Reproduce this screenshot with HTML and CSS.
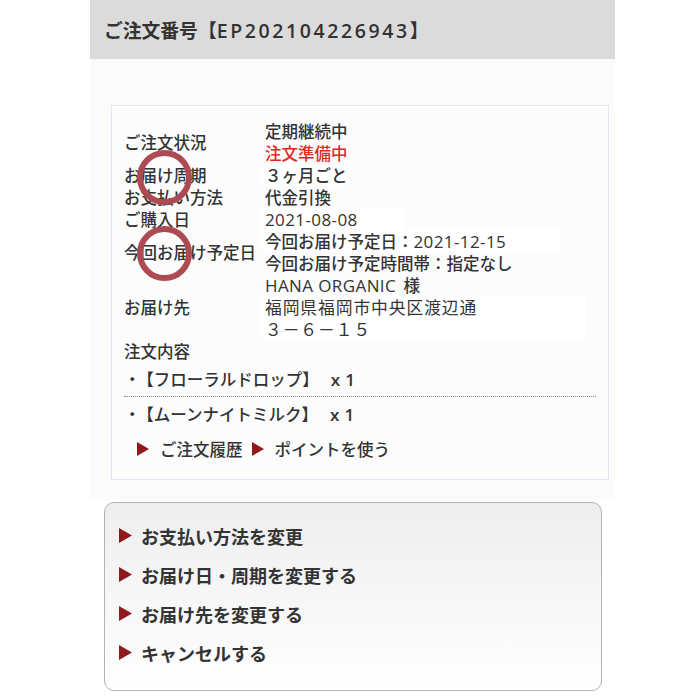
FILE: index.html
```html
<!DOCTYPE html>
<html lang="ja">
<head>
<meta charset="utf-8">
<link rel="stylesheet" href="styles.css">
</head>
<body>
<div class="page">
  <div class="head">ご注文番号【<span class="hnum">EP202104226943</span>】</div>
  <div class="panel">
    <div class="card">
      <div class="rows">
        <div class="label">ご注文状況</div>
        <div class="value"><div>定期継続中</div><div class="red">注文準備中</div></div>
        <div class="label">お届け周期</div>
        <div class="value"><div class="wb">３ヶ月ごと</div></div>
        <div class="label">お支払い方法</div>
        <div class="value"><div>代金引換</div></div>
        <div class="label">ご購入日</div>
        <div class="value"><div class="wb w1"><span class="en">2021-08-08</span></div></div>
        <div class="label">今回お届け予定日</div>
        <div class="value"><div class="wb w2">今回お届け予定日：<span class="en">2021-12-15</span></div><div>今回お届け予定時間帯：指定なし</div></div>
        <div class="label">お届け先</div>
        <div class="value"><div><span class="en">HANA ORGANIC</span>&nbsp; 様</div><div class="wb w3 big">福岡県福岡市中央区渡辺通</div><div class="wb w3 big">３－６－１５</div></div>
      </div>
      <div class="sec">注文内容</div>
      <div class="item dotted"><span class="bul">・</span>【フローラルドロップ】<span class="en qty">x 1</span></div>
      <div class="item"><span class="bul">・</span>【ムーンナイトミルク】<span class="en qty">x 1</span></div>
      <div class="links">
        <span class="link"><svg class="tri" viewBox="0 0 12 14"><polygon points="0,0 12,7 0,14" fill="#8e1a1e"/></svg>ご注文履歴</span>
        <span class="link"><svg class="tri" viewBox="0 0 12 14"><polygon points="0,0 12,7 0,14" fill="#8e1a1e"/></svg>ポイントを使う</span>
      </div>
    </div>
  </div>
  <div class="actions">
    <div class="act"><svg class="tri2" viewBox="0 0 13 15"><polygon points="0,0 13,7.5 0,15" fill="#8e1a1e"/></svg>お支払い方法を変更</div>
    <div class="act"><svg class="tri2" viewBox="0 0 13 15"><polygon points="0,0 13,7.5 0,15" fill="#8e1a1e"/></svg>お届け日・周期を変更する</div>
    <div class="act"><svg class="tri2" viewBox="0 0 13 15"><polygon points="0,0 13,7.5 0,15" fill="#8e1a1e"/></svg>お届け先を変更する</div>
    <div class="act"><svg class="tri2" viewBox="0 0 13 15"><polygon points="0,0 13,7.5 0,15" fill="#8e1a1e"/></svg>キャンセルする</div>
  </div>
</div>
<div class="ring ring1"></div>
<div class="ring ring2"></div>
</body>
</html>
```

FILE: styles.css
```css
html, body {
  margin: 0;
  padding: 0;
  background: #ffffff;
}
body {
  font-family: "Noto Sans CJK JP", "Noto Sans", sans-serif;
  color: #333333;
  position: relative;
  width: 700px;
  height: 700px;
  overflow: hidden;
}
.page {
  width: 525px;
  margin-left: 90px;
}
.head {
  height: 59px;
  background: #dcdbdc;
  box-sizing: border-box;
  padding-left: 14px;
  font-size: 18.8px;
  font-weight: 700;
  line-height: 59px;
  color: #333333;
}
.hnum {
  font-family: "Open Sans", "Noto Sans", sans-serif;
  font-size: 19.5px;
  font-weight: 600;
  letter-spacing: 2.6px;
  line-height: 1;
}
.panel {
  background: #fbfbfc;
  padding: 46px 6px 20px 21px;
}
.card {
  border: 1px solid #e3e5f3;
  background: #fcfcfd;
  padding: 14px 12px 19px 12px;
  font-size: 16.5px;
  font-weight: 500;
  line-height: 22px;
}
.en {
  font-family: "Open Sans", "Noto Sans", sans-serif;
  font-size: 17px;
  font-weight: 400;
  letter-spacing: 0.4px;
  line-height: 1;
}
.rows {
  display: grid;
  grid-template-columns: 141px 1fr;
}
.label {
  align-self: center;
}
.value {
  display: flex;
  flex-direction: column;
}
.value > div {
  height: 22px;
}
.wb {
  background: #ffffff;
  margin-left: -4px;
  padding-left: 4px;
  align-self: flex-start;
}
.w1 { width: 138px; }
.w2 { width: 296px; }
.w3 { width: 321px; }
.big {
  font-size: 16.8px;
  font-weight: 400;
  letter-spacing: 0.9px;
}
.red {
  color: #e3271e;
}
.item {
  padding: 6px 0 6px 0;
  height: 22px;
  font-size: 16.5px;
}
.bul {
  margin-right: 5px;
}
.qty {
  margin-left: 12px;
  font-weight: 600;
}
.dotted {
  border-bottom: 1px dotted #8a8a8a;
}
.links {
  margin-top: 7px;
  padding-left: 13px;
  display: flex;
  gap: 9px;
}
.link {
  display: inline-flex;
  align-items: center;
}
.tri {
  width: 12px;
  height: 14px;
  margin-right: 11px;
}
.actions {
  margin: 2px 13px 0 14px;
  height: 189px;
  box-sizing: border-box;
  border: 1px solid #b3b3b3;
  border-radius: 10px;
  background: linear-gradient(#eeeeee, #ffffff);
  padding: 13px 0 0 14px;
}
.act {
  display: flex;
  align-items: center;
  height: 39px;
  font-size: 18px;
  font-weight: 700;
  color: #333333;
}
.tri2 {
  width: 13px;
  height: 15px;
  margin-right: 9px;
}
.ring {
  position: absolute;
  width: 55px;
  height: 55px;
  box-sizing: border-box;
  border: 6px solid #ad4a52;
  border-radius: 50%;
  left: 137px;
}
.ring1 { top: 150px; }
.ring2 { top: 226px; }
```
